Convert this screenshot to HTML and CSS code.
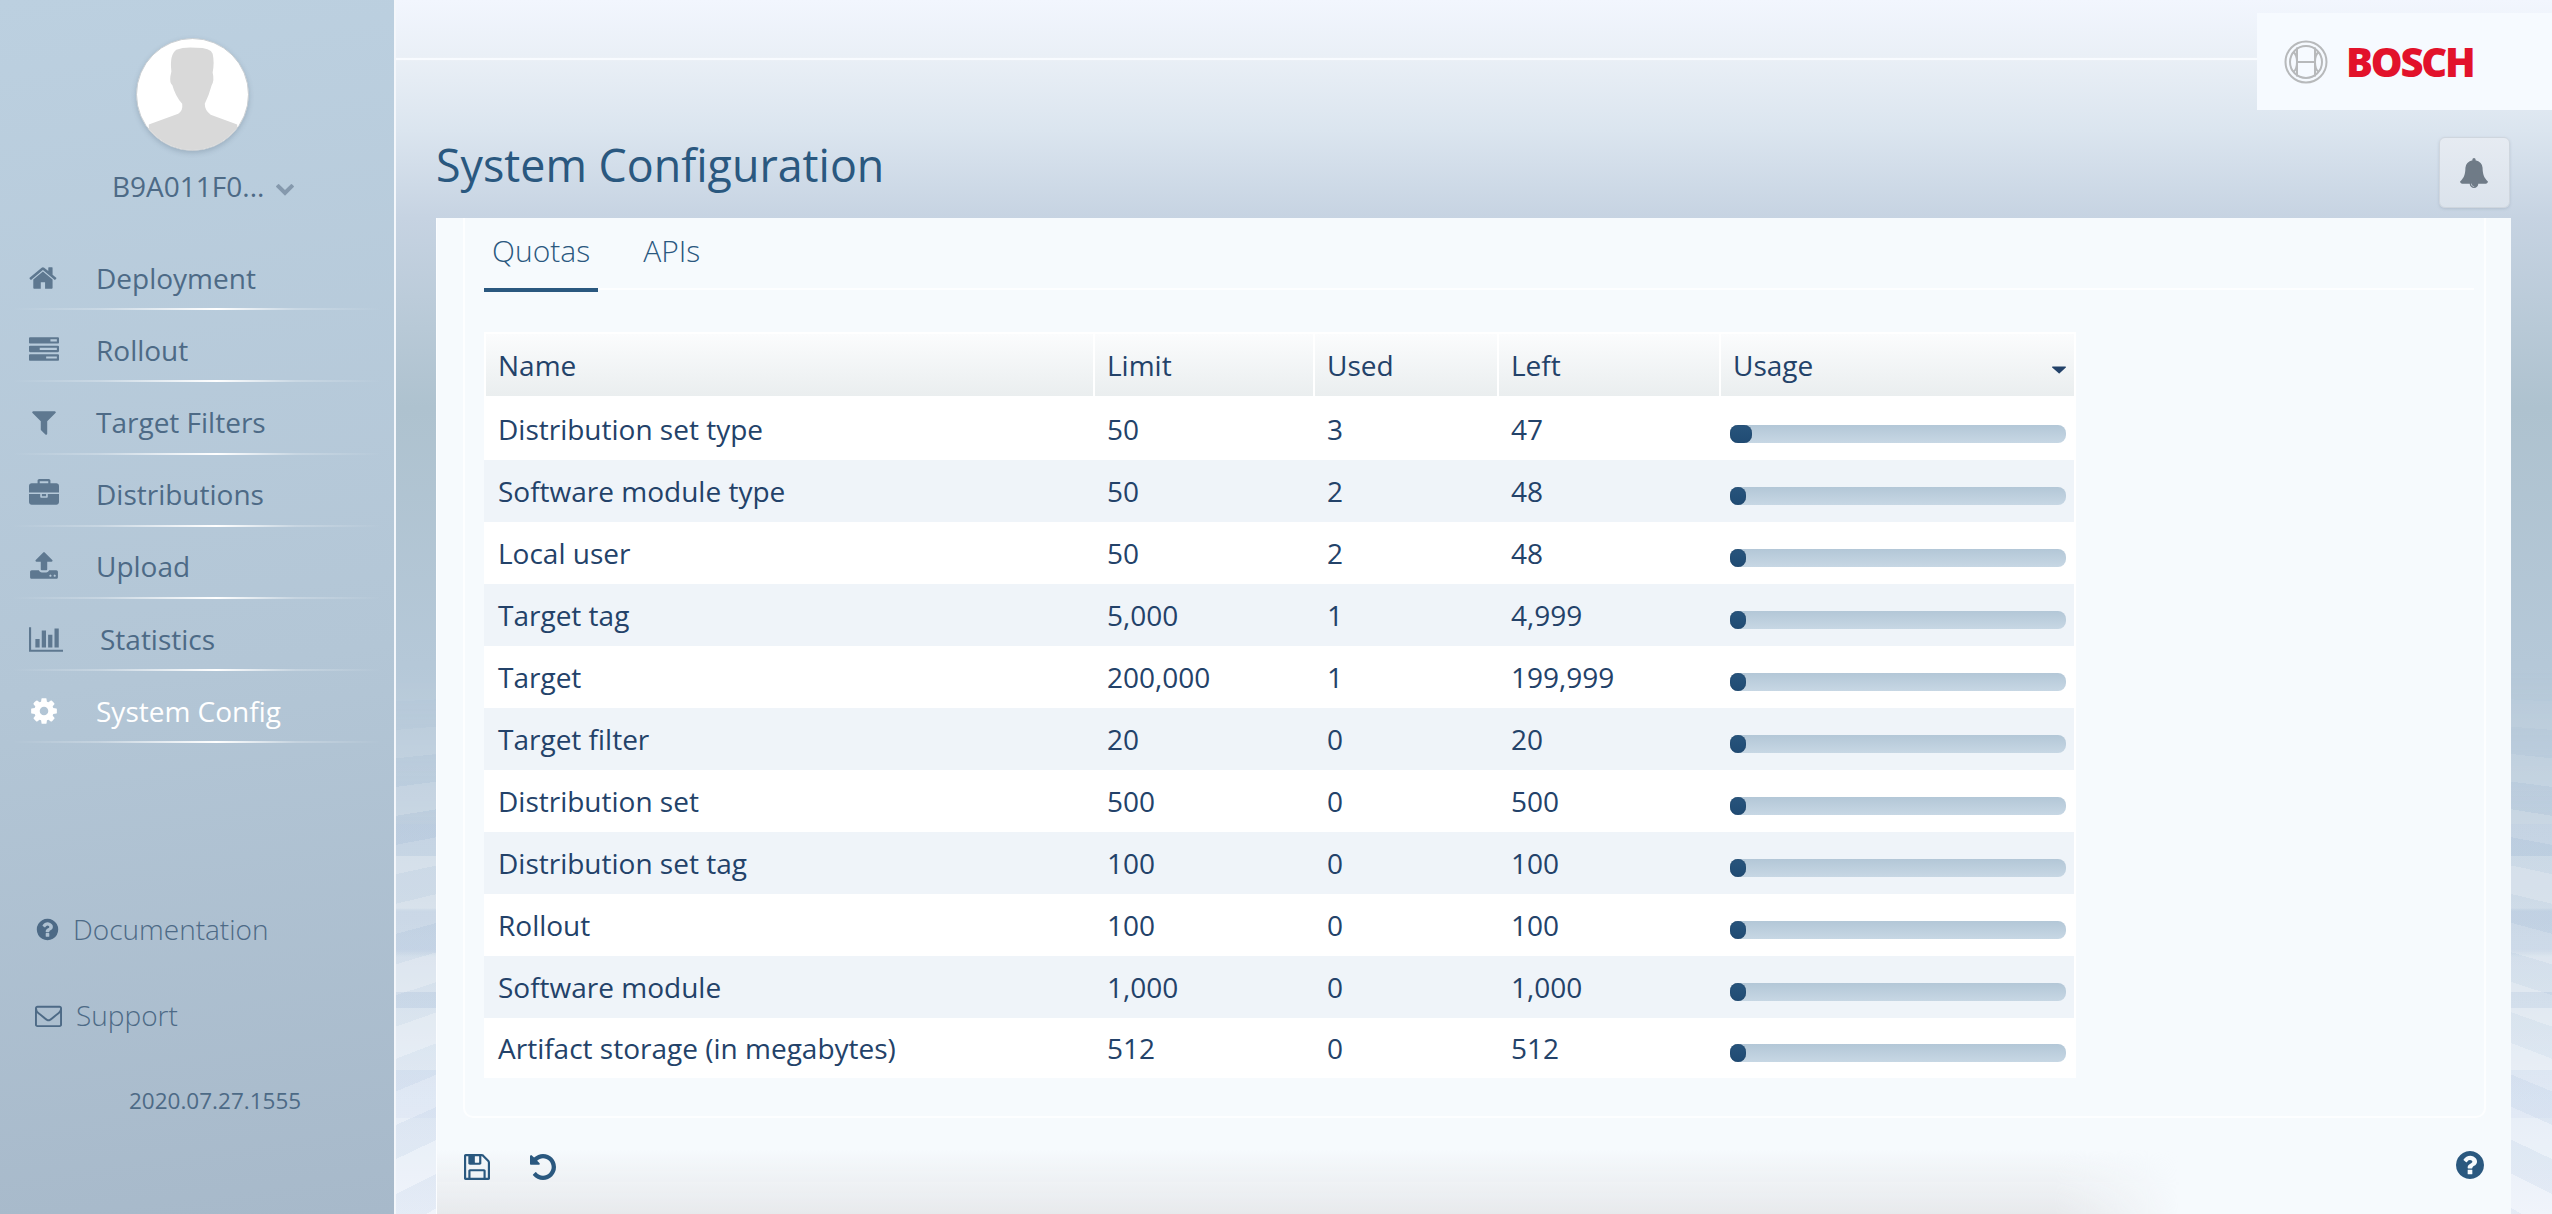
FILE: index.html
```html
<!DOCTYPE html>
<html lang="en">
<head>
    <meta charset="UTF-8">
    <meta name="viewport" content="width=device-width, initial-scale=1.0">
    <title>System Configuration</title>
    <link rel="stylesheet" href="styles.css">
</head>
<body>
    <aside class="sidebar">
        <div class="avatar">
            <svg viewBox="0 0 113 113">
                <path d="M12 87 L42 76 Q47 73 46 66 Q39 58 36 47 Q33 45 34 38 L35 33 Q33 16 40 11 Q48 8 60 9 Q75 9 77 15 Q79 24 77 34 Q79 42 76 47 Q73 58 69 66 Q69 73 75 77 L102 87 L102 113 L12 113 Z"/>
            </svg>
        </div>
        <div class="user">
            <span>B9A011F0...</span>
            <svg class="user-chevron" viewBox="0 0 1792 1792"><path d="M1683 808l-742 741q-19 19-45 19t-45-19l-742-741q-19-19-19-45.500t19-45.500l166-165q19-19 45-19t45 19l531 531 531-531q19-19 45-19t45 19l166 165q19 19 19 45.500t-19 45.500z"/></svg>
        </div>

        <nav class="nav">
            <a class="nav-item" href="#">
                <svg class="nav-icon" viewBox="0 0 1792 1792"><path d="M1408 992v480q0 26-19 45t-45 19h-384v-384h-256v384h-384q-26 0-45-19t-19-45v-480q0-1 .5-3t.5-3l575-474 575 474q1 2 1 6zm223-69l-62 74q-8 9-21 11h-3q-13 0-21-7l-692-577-692 577q-12 8-24 7-13-2-21-11l-62-74q-8-10-7-23.500t11-21.500l719-599q32-26 76-26t76 26l244 204v-195q0-14 9-23t23-9h192q14 0 23 9t9 23v408l219 182q10 8 11 21.500t-7 23.500z"/></svg>
                Deployment
            </a>
            <a class="nav-item" href="#">
                <svg class="nav-icon" viewBox="0 0 1792 1792"><path d="M1024 1408h640v-128h-640v128zm-384-512h1024v-128h-1024v128zm640-512h384v-128h-384v128zm512 832v256q0 26-19 45t-45 19h-1664q-26 0-45-19t-19-45v-256q0-26 19-45t45-19h1664q26 0 45 19t19 45zm0-512v256q0 26-19 45t-45 19h-1664q-26 0-45-19t-19-45v-256q0-26 19-45t45-19h1664q26 0 45 19t19 45zm0-512v256q0 26-19 45t-45 19h-1664q-26 0-45-19t-19-45v-256q0-26 19-45t45-19h1664q26 0 45 19t19 45z"/></svg>
                Rollout
            </a>
            <a class="nav-item" href="#">
                <svg class="nav-icon" viewBox="0 0 1792 1792"><path d="M1595 295q17 41-14 70l-493 493v742q0 42-39 59-13 5-25 5-27 0-45-19l-256-256q-19-19-19-45v-486l-493-493q-31-29-14-70 17-39 59-39h1280q42 0 59 39z"/></svg>
                Target Filters
            </a>
            <a class="nav-item" href="#">
                <svg class="nav-icon" viewBox="0 0 1792 1792"><path d="M640 256h512v-128h-512v128zm1152 640v480q0 66-47 113t-113 47h-1472q-66 0-113-47t-47-113v-480h672v160q0 26 19 45t45 19h320q26 0 45-19t19-45v-160h672zm-768 0v128h-256v-128h256zm768-480v384h-1792v-384q0-66 47-113t113-47h352v-160q0-40 28-68t68-28h576q40 0 68 28t28 68v160h352q66 0 113 47t47 113z"/></svg>
                Distributions
            </a>
            <a class="nav-item" href="#">
                <svg class="nav-icon" viewBox="0 0 1792 1792"><path d="M1344 1472q0-26-19-45t-45-19-45 19-19 45 19 45 45 19 45-19 19-45zm256 0q0-26-19-45t-45-19-45 19-19 45 19 45 45 19 45-19 19-45zm128-224v320q0 40-28 68t-68 28h-1472q-40 0-68-28t-28-68v-320q0-40 28-68t68-28h427q21 56 70.500 92t110.500 36h256q61 0 110.500-36t70.500-92h427q40 0 68 28t28 68zm-325-648q-17 40-59 40h-256v448q0 26-19 45t-45 19h-256q-26 0-45-19t-19-45v-448h-256q-42 0-59-40-17-39 14-69l448-448q18-19 45-19t45 19l448 448q31 30 14 69z"/></svg>
                Upload
            </a>
            <a class="nav-item" href="#">
                <svg class="nav-icon nav-icon-wide" viewBox="0 0 2048 1792"><path d="M640 896v512h-256v-512h256zm384-512v1024h-256v-1024h256zm1024 1152v128h-2048v-1472h128v1344h1920zm-640-896v768h-256v-768h256zm384-384v1152h-256v-1152h256z"/></svg>
                Statistics
            </a>
            <a class="nav-item active" href="#">
                <svg class="nav-icon" viewBox="0 0 1792 1792"><path d="M1152 896q0-106-75-181t-181-75-181 75-75 181 75 181 181 75 181-75 75-181zm512-109v222q0 12-8 23t-20 13l-185 28q-19 54-39 91 35 50 107 138 10 12 10 25t-9 23q-27 37-99 108t-94 71q-12 0-26-9l-138-108q-44 23-91 38-16 136-29 186-7 28-36 28h-222q-14 0-24.500-8.500t-11.500-21.500l-28-184q-49-16-90-37l-141 107q-10 9-25 9-14 0-25-11-126-114-165-168-7-10-7-23 0-12 8-23 15-21 51-66.500t54-70.500q-27-50-41-99l-183-27q-13-2-21-12.500t-8-23.500v-222q0-12 8-23t19-13l186-28q14-46 39-92-40-57-107-138-10-12-10-24 0-10 9-23 26-36 98.500-107.500t94.500-71.500q13 0 26 10l138 107q44-23 91-38 16-136 29-186 7-28 36-28h222q14 0 24.500 8.500t11.500 21.500l28 184q49 16 90 37l142-107q9-9 24-9 13 0 25 10 129 119 165 170 7 8 7 22 0 12-8 23-15 21-51 66.500t-54 70.500q26 50 41 98l183 28q13 2 21 12.500t8 23.500z"/></svg>
                System Config
            </a>
        </nav>

        <div class="side-links">
            <a class="side-link side-doc" href="#">
                <svg class="side-icon" viewBox="0 0 1792 1792"><path d="M1024 1376v-192q0-14-9-23t-23-9h-192q-14 0-23 9t-9 23v192q0 14 9 23t23 9h192q14 0 23-9t9-23zm256-672q0-88-55.500-163t-138.500-116-170-41q-243 0-371 213-15 24 8 42l132 100q7 6 19 6 16 0 25-12 53-68 86-92 34-24 86-24 48 0 85.500 26t37.500 59q0 38-20 61t-68 45q-63 28-115.500 86.500t-52.500 125.500v36q0 14 9 23t23 9h192q14 0 23-9t9-23q0-19 21.500-49.500t54.500-49.500q32-18 49-28.500t46-35 44.500-48 28-60.500 12.500-81zm384 192q0 209-103 385.500t-279.500 279.500-385.500 103-385.500-103-279.500-279.500-103-385.500 103-385.500 279.500-279.500 385.500-103 385.500 103 279.500 279.500 103 385.500z"/></svg>
                Documentation
            </a>
            <a class="side-link side-support" href="#">
                <svg class="side-icon side-icon-mail" viewBox="0 0 1792 1792"><path d="M1664 1504v-768q-32 36-69 66-268 206-426 338-51 43-83 67t-86.500 48.500-102.500 24.500h-2q-48 0-102.500-24.500t-86.500-48.500-83-67q-158-132-426-338-37-30-69-66v768q0 13 9.500 22.500t22.500 9.500h1472q13 0 22.500-9.500t9.500-22.500zm0-1051v-24.500l-.5-13-3-12.500-5.500-9-9-7.500-14-2.500h-1472q-13 0-22.500 9.500t-9.500 22.500q0 168 147 284 193 152 401 317 6 5 35 29.500t46 37.500 44.500 31.500 50.500 27.500 43 9h2q20 0 43-9t50.500-27.500 44.500-31.500 46-37.500 35-29.500q208-165 401-317 54-43 100.500-115.500t46.500-131.500zm128-37v1088q0 66-47 113t-113 47h-1472q-66 0-113-47t-47-113v-1088q0-66 47-113t113-47h1472q66 0 113 47t47 113z"/></svg>
                Support
            </a>
            <div class="version">2020.07.27.1555</div>
        </div>
    </aside>

    <main class="main">
        <div class="topline"></div>

        <div class="logo">
            <svg class="logo-mark" viewBox="0 0 44 44">
                <circle cx="22" cy="22" r="20.500"/>
                <circle cx="22" cy="22" r="16"/>
                <path d="M13 7.500 V36.500 M31 7.500 V36.500 M13 22 H31 M9 12 Q13 14 13 22 Q13 30 9 32 M35 12 Q31 14 31 22 Q31 30 35 32"/>
            </svg>
            <span class="logo-text">BOSCH</span>
        </div>

        <div class="title-row">
            <h1>System Configuration</h1>
            <button class="bell">
                <svg viewBox="0 0 1792 1792"><path d="M912 1696q0-16-16-16-59 0-101.500-42.500t-42.500-101.500q0-16-16-16t-16 16q0 73 51.500 124.500t124.500 51.500q16 0 16-16zm816-288q0 52-38 90t-90 38h-448q0 106-75 181t-181 75-181-75-75-181h-448q-52 0-90-38t-38-90q50-42 91-88t85-119.500 74.500-158.500 50-206 19.500-260q0-152 117-282.500t307-158.500q-8-19-8-39 0-40 28-68t68-28 68 28 28 68q0 20-8 39 190 28 307 158.500t117 282.500q0 139 19.500 260t50 206 74.500 158.500 85 119.500 91 88z"/></svg>
            </button>
        </div>

        <section class="panel">
            <div class="box">
                <div class="tabs">
                    <a class="tab active" href="#">Quotas</a>
                    <a class="tab" href="#">APIs</a>
                </div>

                <table class="quota-table">
                    <thead>
                        <tr>
                            <th>Name</th>
                            <th>Limit</th>
                            <th>Used</th>
                            <th>Left</th>
                            <th class="usage-head">Usage
                                <svg viewBox="0 0 1408 700"><path d="M1408 64q0 26-19 45l-620 570q-19 19-45 19t-45-19l-660-570q-19-19-19-45t19-45 45-19h1280q26 0 45 19t19 45z"/></svg>
                            </th>
                        </tr>
                    </thead>
                    <tbody>
                        <tr><td>Distribution set type</td><td>50</td><td>3</td><td>47</td><td><div class="bar"><div class="bar-fill" style="width: 22px"></div></div></td></tr>
                        <tr><td>Software module type</td><td>50</td><td>2</td><td>48</td><td><div class="bar"><div class="bar-fill" style="width: 16px"></div></div></td></tr>
                        <tr><td>Local user</td><td>50</td><td>2</td><td>48</td><td><div class="bar"><div class="bar-fill" style="width: 16px"></div></div></td></tr>
                        <tr><td>Target tag</td><td>5,000</td><td>1</td><td>4,999</td><td><div class="bar"><div class="bar-fill" style="width: 16px"></div></div></td></tr>
                        <tr><td>Target</td><td>200,000</td><td>1</td><td>199,999</td><td><div class="bar"><div class="bar-fill" style="width: 16px"></div></div></td></tr>
                        <tr><td>Target filter</td><td>20</td><td>0</td><td>20</td><td><div class="bar"><div class="bar-fill" style="width: 16px"></div></div></td></tr>
                        <tr><td>Distribution set</td><td>500</td><td>0</td><td>500</td><td><div class="bar"><div class="bar-fill" style="width: 16px"></div></div></td></tr>
                        <tr><td>Distribution set tag</td><td>100</td><td>0</td><td>100</td><td><div class="bar"><div class="bar-fill" style="width: 16px"></div></div></td></tr>
                        <tr><td>Rollout</td><td>100</td><td>0</td><td>100</td><td><div class="bar"><div class="bar-fill" style="width: 16px"></div></div></td></tr>
                        <tr><td>Software module</td><td>1,000</td><td>0</td><td>1,000</td><td><div class="bar"><div class="bar-fill" style="width: 16px"></div></div></td></tr>
                        <tr><td>Artifact storage (in megabytes)</td><td>512</td><td>0</td><td>512</td><td><div class="bar"><div class="bar-fill" style="width: 16px"></div></div></td></tr>
                    </tbody>
                </table>
            </div>

            <div class="panel-foot">
                <svg class="foot-icon" viewBox="128 128 1536 1536"><path d="M512 1536h768v-384h-768v384zm896 0h128v-896q0-14-10-38.500t-20-34.500l-281-281q-10-10-34-20t-39-10v416q0 40-28 68t-68 28h-576q-40 0-68-28t-28-68v-416h-128v1280h128v-416q0-40 28-68t68-28h832q40 0 68 28t28 68v416zm-384-928v-320q0-13-9.500-22.500t-22.500-9.500h-192q-13 0-22.500 9.500t-9.500 22.500v320q0 13 9.500 22.500t22.500 9.500h192q13 0 22.500-9.500t9.500-22.500zm640 32v928q0 40-28 68t-68 28h-1344q-40 0-68-28t-28-68v-1344q0-40 28-68t68-28h928q40 0 88 20t76 48l280 280q28 28 48 76t20 88z"/></svg>
                <svg class="foot-icon" viewBox="128 128 1536 1536"><path d="M1664 896q0 156-61 298t-164 245-245 164-298 61q-172 0-327-72.500t-264-204.500q-7-10-6.500-22.500t8.500-20.500l137-138q10-9 25-9 16 2 23 12 73 95 179 147t225 52q104 0 198.500-40.500t163.500-109.500 109.500-163.500 40.500-198.500-40.500-198.500-109.500-163.500-163.500-109.500-198.500-40.500q-98 0-188 35.500t-160 101.500l137 138q31 30 14 69-17 40-59 40h-448q-26 0-45-19t-19-45v-448q0-42 40-59 39-17 69 14l130 129q107-101 244.500-156.500t284.500-55.500q156 0 298 61t245 164 164 245 61 298z"/></svg>
                <svg class="foot-icon foot-help" viewBox="128 128 1536 1536"><path d="M1024 1376v-192q0-14-9-23t-23-9h-192q-14 0-23 9t-9 23v192q0 14 9 23t23 9h192q14 0 23-9t9-23zm256-672q0-88-55.500-163t-138.500-116-170-41q-243 0-371 213-15 24 8 42l132 100q7 6 19 6 16 0 25-12 53-68 86-92 34-24 86-24 48 0 85.500 26t37.500 59q0 38-20 61t-68 45q-63 28-115.500 86.500t-52.500 125.500v36q0 14 9 23t23 9h192q14 0 23-9t9-23q0-19 21.500-49.500t54.500-49.500q32-18 49-28.500t46-35 44.500-48 28-60.500 12.500-81zm384 192q0 209-103 385.500t-279.500 279.500-385.500 103-385.500-103-279.500-279.500-103-385.500 103-385.500 279.500-279.500 385.500-103 385.500 103 279.500 279.500 103 385.500z"/></svg>
            </div>
        </section>
    </main>
</body>
</html>
```

FILE: styles.css
```css
/* General */
* {
    box-sizing: border-box;
}

html, body {
    height: 100%;
}

body {
    display: flex;
    margin: 0;
    overflow: hidden;
    font-family: "Open Sans", "Noto Sans", sans-serif;
    color: #234269;
}

a {
    color: inherit;
    text-decoration: none;
}

svg {
    display: block;
    fill: currentColor;
}

/* Sidebar */
.sidebar {
    display: flex;
    flex-direction: column;
    width: 396px;
    flex-shrink: 0;
    border-right: 2px solid #f4f7fb;
    background: linear-gradient(172deg, #bcd0e0 0%, #b3c6d6 55%, #a7b9ca 100%);
    color: #4d6a86;
}

.avatar {
    width: 113px;
    height: 113px;
    margin: 38px 0 0 136px;
    border-radius: 50%;
    overflow: hidden;
    background: #fff;
    border: 1px solid #c9ced2;
    box-shadow: 0 2px 5px rgba(70, 90, 110, 0.25);
}

.avatar svg {
    fill: #d9d9d9;
}

.user {
    display: flex;
    align-items: center;
    gap: 11px;
    height: 40px;
    margin-top: 15px;
    padding-left: 112px;
    font-size: 28px;
}

.user-chevron {
    width: 20px;
    height: 20px;
    margin-top: 4px;
    color: #8599ad;
}

/* Nav */
.nav {
    margin-top: 32px;
}

.nav-item {
    position: relative;
    display: flex;
    align-items: center;
    gap: 37px;
    height: 72.200px;
    padding: 7px 0 0 29px;
    font-size: 28px;
}

.nav-item::after {
    content: "";
    position: absolute;
    left: 0;
    right: 0;
    bottom: 0;
    height: 2px;
    background: linear-gradient(90deg, rgba(255, 255, 255, 0) 3%, rgba(255, 255, 255, 0.25) 25%, #fff 55%, rgba(255, 255, 255, 0.25) 75%, rgba(255, 255, 255, 0) 97%);
}

.nav-item.active {
    color: #fff;
}

.nav-icon {
    width: 30px;
    height: 30px;
    color: #5e7890;
}

.nav-item.active .nav-icon {
    color: #fff;
}

.nav-icon-wide {
    width: 34px;
}

.side-links {
    margin-top: auto;
    padding-bottom: 98px;
}

.side-link {
    display: flex;
    align-items: center;
    font-size: 28px;
    font-weight: 300;
}

.side-doc {
    gap: 13px;
    padding-left: 35px;
    height: 40px;
}

.side-support {
    gap: 14px;
    padding-left: 35px;
    height: 40px;
    margin-top: 46px;
}

.side-icon {
    width: 25px;
    height: 25px;
}

.side-icon-mail {
    width: 27px;
    height: 27px;
}

.version {
    margin-top: 50px;
    padding-left: 129px;
    font-size: 22.500px;
}

/* Main */
.main {
    position: relative;
    display: flex;
    flex-direction: column;
    flex: 1;
    min-width: 0;
    background: linear-gradient(180deg, #f2f6fe 0, #e9eff6 60px, #dbe5ef 130px, #c6d3e2 218px, #aec2cf 407px, #b5c8d8 665px, #c8d6e4 900px, #e3ebf5 1100px, #eef3fb 1214px);
}

/* floor pattern behind the panel */
.main::before {
    content: "";
    position: absolute;
    left: 0;
    right: 0;
    top: 665px;
    bottom: 0;
    background:
        linear-gradient(180deg, transparent 0 159px, rgba(180, 200, 225, 0.2) 159px 191px, rgba(255, 255, 255, 0.18) 191px 243px, rgba(180, 200, 225, 0.2) 246px 285px, rgba(255, 255, 255, 0.18) 292px 327px, rgba(180, 200, 225, 0.2) 327px 343px, rgba(255, 255, 255, 0.18) 343px 405px, rgba(200, 215, 240, 0.2) 405px 453px, transparent 453px),
        repeating-conic-gradient(from 0deg at 50% -20px, rgba(255, 255, 255, 0.12) 0 1.500deg, rgba(160, 185, 215, 0.12) 1.500deg 3deg);
    -webkit-mask-image: linear-gradient(180deg, transparent, #000 160px);
    mask-image: linear-gradient(180deg, transparent, #000 160px);
}

.topline {
    position: relative;
    height: 60px;
    flex-shrink: 0;
}

.topline::after {
    content: "";
    position: absolute;
    left: 0;
    right: 0;
    top: 58px;
    height: 2px;
    background: #f8fbff;
    box-shadow: 0 0 1px #f8fbff;
}

.logo {
    position: absolute;
    top: 13px;
    right: 0;
    display: flex;
    align-items: center;
    gap: 18px;
    width: 295px;
    height: 97px;
    padding-left: 27px;
    background: #f6faff;
}

.logo-mark {
    width: 44px;
    height: 44px;
    fill: none;
    stroke: #b7b9bb;
    stroke-width: 2;
}

.logo-text {
    font-size: 40px;
    font-weight: 800;
    letter-spacing: -2.200px;
    color: #e2122b;
}

.title-row {
    position: relative;
    display: flex;
    justify-content: space-between;
    height: 158px;
    padding: 77px 42px 0 40px;
    flex-shrink: 0;
}

.title-row h1 {
    margin: 0;
    font-size: 44.800px;
    font-weight: 400;
    line-height: 56px;
    color: #2a587f;
}

.bell {
    display: flex;
    align-items: center;
    justify-content: center;
    width: 71px;
    height: 71px;
    padding: 0 2px 0 0;
    border: 1px solid #cfd6de;
    border-radius: 6px;
    background: linear-gradient(180deg, #e6ebf2, #dbe3ec);
    box-shadow: 0 1px 3px rgba(90, 110, 130, 0.2);
    color: #6f7b87;
}

.bell svg {
    width: 30px;
    height: 30px;
}

/* Panel */
.panel {
    position: relative;
    display: flex;
    flex-direction: column;
    flex: 1;
    margin: 0 41px 0 40px;
    border-left: 1px solid #fbfdff;
    background: #f6fafd;
}

.box {
    height: 900px;
    margin: 0 25px 0 26px;
    padding-left: 19px;
    border: 2px solid #fdfeff;
    border-top: none;
    border-radius: 0 0 10px 10px;
}

/* Tabs */
.tabs {
    display: flex;
    gap: 37px;
    height: 72px;
    margin-right: 10px;
    border-bottom: 2px solid #fdfeff;
}

.tab {
    height: 74px;
    padding: 12px 8px 0;
    font-size: 30px;
    font-weight: 300;
    color: #2a587f;
}

.tab.active {
    border-bottom: 4px solid #2a587f;
}

/* Table */
.quota-table {
    width: 1592px;
    margin-top: 42px;
    border-collapse: separate;
    border-spacing: 0;
    table-layout: fixed;
    background: #fff;
    font-size: 28px;
}

.quota-table th {
    height: 66px;
    padding: 0 0 0 12px;
    border-top: 2px solid #fff;
    border-bottom: 2px solid #fff;
    border-left: 2px solid #fff;
    background: linear-gradient(180deg, #fbfcfd, #eaeeef);
    font-weight: 400;
    text-align: left;
}

.quota-table th:nth-child(1) {
    width: 609px;
}

.quota-table th:nth-child(2) {
    width: 220px;
}

.quota-table th:nth-child(3) {
    width: 184px;
}

.quota-table th:nth-child(4) {
    width: 222px;
}

.usage-head {
    position: relative;
    border-right: 2px solid #fff;
}

.usage-head svg {
    position: absolute;
    right: 8px;
    top: 32px;
    width: 14px;
    height: 8px;
}

.quota-table td {
    height: 62px;
    padding: 0 0 1px 14px;
}

.quota-table tbody tr:nth-child(even) td {
    background: #eff4f9;
}

.quota-table tbody tr:last-child td {
    height: 60px;
}

.quota-table td:last-child {
    padding: 10px 8px 0 11px;
    border-right: 2px solid #fff;
}

.bar {
    height: 18px;
    border-radius: 8px;
    background: linear-gradient(180deg, #b3c7d7, #c7d7e4);
}

.bar-fill {
    height: 18px;
    border-radius: 8px;
    background: linear-gradient(180deg, #28547c, #204b73);
    box-shadow: inset 0 0 1px #16385a;
}

/* Panel footer */
.panel-foot {
    position: relative;
    display: flex;
    flex: 1;
    gap: 40px;
    padding: 36px 27px 0 27px;
    color: #2a587f;
}

.panel-foot::before {
    content: "";
    position: absolute;
    left: 0;
    right: 0;
    bottom: 0;
    height: 64px;
    background: linear-gradient(180deg, rgba(231, 233, 236, 0), #e7e9ec);
    -webkit-mask-image: linear-gradient(90deg, #000 78%, transparent 84%);
    mask-image: linear-gradient(90deg, #000 78%, transparent 84%);
}

.foot-icon {
    position: relative;
    width: 26px;
    height: 26px;
}

.foot-help {
    width: 28px;
    height: 28px;
    margin: -3px 0 0 auto;
}
```
